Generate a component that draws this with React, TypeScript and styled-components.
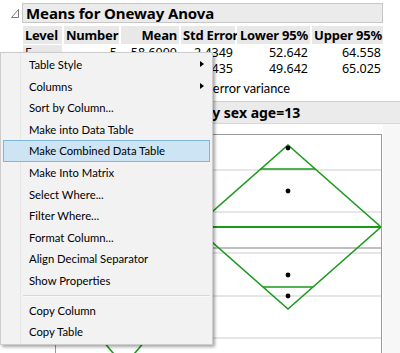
import styled, { createGlobalStyle } from 'styled-components';

const GlobalStyle = createGlobalStyle`
  html, body {
    margin: 0;
    padding: 0;
    background: #ffffff;
  }
  body {
    font-family: "Noto Sans", "Open Sans", sans-serif;
    color: #000;
    width: 400px;
    height: 353px;
    overflow: hidden;
  }
`;

const Page = styled.div`
  position: relative;
  width: 400px;
  height: 353px;
  overflow: hidden;
`;

const OutlineRow = styled.div`
  display: flex;
  align-items: center;
  padding: 3px 0 0 11px;
  gap: 3px;
`;

const Disclosure = styled.svg`
  width: 8px;
  height: 9px;
  flex: none;
`;

const TitleBox = styled.div`
  box-sizing: border-box;
  width: 361px;
  height: 20px;
  background: #ebebeb;
  border: 1px solid #c6c6c6;
  font-weight: 700;
  font-size: 15px;
  line-height: 18px;
  padding-left: 3px;
  white-space: nowrap;
  letter-spacing: -0.1px;
`;

const Grid = styled.div`
  display: grid;
  grid-template-columns: 39px 55px 58px 54px 73px 71px;
  column-gap: 2px;
  margin: 3px 0 0 23px;
  font-size: 12.5px;
`;

const HeadCell = styled.div<{ $left?: boolean }>`
  background: #e8e8e8;
  height: 18px;
  line-height: 18px;
  font-weight: 700;
  font-size: 13px;
  letter-spacing: -0.2px;
  text-align: ${(p) => (p.$left ? 'left' : 'right')};
  padding: 0 2px;
  white-space: nowrap;
  margin-bottom: 1px;
`;

const Cell = styled.div<{ $level?: boolean }>`
  background: ${(p) => (p.$level ? '#e8e8e8' : 'transparent')};
  height: 16px;
  line-height: 16px;
  text-align: ${(p) => (p.$level ? 'left' : 'right')};
  padding: 0 2px;
  white-space: nowrap;
`;

const Note = styled.div`
  margin: 3px 0 0 14px;
  font-family: Lato, "Noto Sans", sans-serif;
  font-size: 12.8px;
  line-height: 16px;
  white-space: nowrap;
`;

const Section = styled.div`
  margin-top: 5px;
  background: #f7f7f7;
`;

const SectionTitle = styled.div`
  height: 21px;
  background: #ebebeb;
  border-top: 1px solid #d0d0d0;
  border-bottom: 1px solid #d8d8d8;
  font-weight: 700;
  font-size: 14px;
  line-height: 21px;
  padding-left: 15px;
  white-space: nowrap;
`;

const PlotArea = styled.div`
  width: 383px;
  background: #fff;
  padding: 10px 0 0 55px;
  box-sizing: border-box;
  height: 240px;
`;

const PlotFrame = styled.div`
  width: 327px;
  height: 230px;
  box-sizing: border-box;
  border: 1px solid #9a9a9a;
  border-bottom: none;
  svg {
    display: block;
  }
`;

const Menu = styled.div`
  position: absolute;
  left: 0;
  top: 52px;
  width: 213px;
  box-sizing: border-box;
  background: #f2f2f2;
  border: 1px solid #cccccc;
  padding: 1px 2px;
  box-shadow: 2px 2px 3px rgba(0, 0, 0, 0.35);
  font-family: Lato, "Noto Sans", sans-serif;
  font-size: 11.3px;
  &::before {
    content: '';
    position: absolute;
    left: 19px;
    top: 0;
    bottom: 0;
    width: 1px;
    background: #e6e6e6;
  }
`;

const Item = styled.div<{ $active?: boolean }>`
  position: relative;
  box-sizing: border-box;
  height: 21.6px;
  line-height: 20px;
  padding-left: 25px;
  border: 1px solid ${(p) => (p.$active ? '#7fb6dd' : 'transparent')};
  background: ${(p) => (p.$active ? '#cce4f3' : 'transparent')};
  white-space: nowrap;
`;

const Arrow = styled.span`
  position: absolute;
  right: 5px;
  top: 6px;
  width: 0;
  height: 0;
  border-top: 3.5px solid transparent;
  border-bottom: 3.5px solid transparent;
  border-left: 4px solid #000;
`;

const Separator = styled.div`
  height: 1px;
  margin: 3px 0 3px 20px;
  background: #d7d7d7;
  border-bottom: 1px solid #fafafa;
`;

const columns = ['Level', 'Number', 'Mean', 'Std Error', 'Lower 95%', 'Upper 95%'];
const rows = [
  ['F', '5', '58.6000', '2.4349', '52.642', '64.558'],
  ['M', '3', '57.3333', '3.1435', '49.642', '65.025'],
];

const menuItems: { label: string; sub?: boolean; sep?: boolean; active?: boolean }[] = [
  { label: 'Table Style', sub: true },
  { label: 'Columns', sub: true },
  { label: 'Sort by Column...' },
  { label: 'Make into Data Table' },
  { label: 'Make Combined Data Table', active: true },
  { label: 'Make Into Matrix' },
  { label: 'Select Where...' },
  { label: 'Filter Where...' },
  { label: 'Format Column...' },
  { label: 'Align Decimal Separator' },
  { label: 'Show Properties' },
  { label: 'Copy Column', sep: true },
  { label: 'Copy Table' },
];

const green = '#1a9a1a';

const Diamond = ({ cx, cy, hw, hh }: { cx: number; cy: number; hw: number; hh: number }) => (
  <polygon
    points={`${cx},${cy - hh} ${cx + hw},${cy} ${cx},${cy + hh} ${cx - hw},${cy}`}
    fill="none"
    stroke={green}
    strokeWidth={1.6}
  />
);

const App = () => (
  <Page>
    <GlobalStyle />
    <OutlineRow>
      <Disclosure viewBox="0 0 8 9">
        <polygon points="7.5,0.5 7.5,8.5 0.5,8.5" fill="#fff" stroke="#7a7a7a" strokeWidth={1} />
      </Disclosure>
      <TitleBox>Means for Oneway Anova</TitleBox>
    </OutlineRow>
    <Grid>
      {columns.map((c, i) => (
        <HeadCell key={c} $left={i === 0}>{c}</HeadCell>
      ))}
      {rows.map((r) => r.map((v, i) => (
        <Cell key={`${r[0]}-${i}`} $level={i === 0}>{v}</Cell>
      )))}
    </Grid>
    <Note>Std Error uses a pooled estimate of error variance</Note>
    <Section>
      <SectionTitle>Oneway Analysis of height by sex age=13</SectionTitle>
      <PlotArea>
        <PlotFrame>
          <svg width="325" height="229" viewBox="0 0 325 229">
            {[35, 77, 118, 161, 203].map((y) => (
              <line key={y} x1={0} x2={325} y1={y} y2={y} stroke="#dedede" strokeWidth={1.5} />
            ))}
            <line x1={0} x2={325} y1={113} y2={113} stroke="#808080" strokeWidth={1.2} />
            <line x1={0} x2={325} y1={92} y2={92} stroke={green} strokeWidth={1.8} />
            <Diamond cx={232} cy={92} hw={93} hh={82} />
            <line x1={204.5} x2={259.5} y1={34} y2={34} stroke={green} strokeWidth={1.6} />
            <line x1={207} x2={257} y1={152} y2={152} stroke={green} strokeWidth={1.6} />
            <Diamond cx={68} cy={136} hw={80} hh={95} />
            {[13, 56, 140, 161].map((y) => (
              <circle key={y} cx={232} cy={y} r={2.4} fill="#000" />
            ))}
          </svg>
        </PlotFrame>
      </PlotArea>
    </Section>
    <Menu>
      {menuItems.map((m) => (
        <div key={m.label}>
          {m.sep && <Separator />}
          <Item $active={m.active}>
            {m.label}
            {m.sub && <Arrow />}
          </Item>
        </div>
      ))}
    </Menu>
  </Page>
);

export default App;
